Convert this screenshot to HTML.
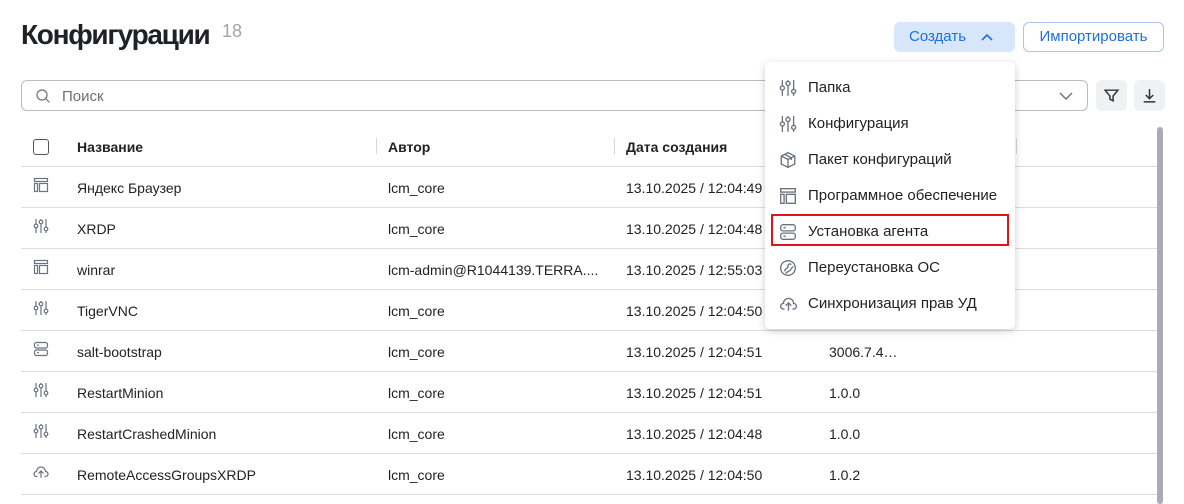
<!DOCTYPE html><html><head><meta charset="utf-8"><style>
body{margin:0;width:1184px;height:504px;overflow:hidden;background:#fff;font-family:"Liberation Sans","Noto Sans CJK SC",sans-serif;color:#222;position:relative}
.abs{position:absolute}
h1{position:absolute;left:21px;top:19px;margin:0;font-size:28px;font-weight:bold;letter-spacing:-1.3px;color:#1f2126}
.cnt{position:absolute;left:222px;top:21px;font-size:18px;color:#a0a4ab}
.btn{position:absolute;height:30px;border-radius:6px;font-size:15px;line-height:30px;color:#1f6fe0;box-sizing:border-box}
.search{position:absolute;left:21px;top:80px;width:1067px;height:31px;border:1px solid #b8bcc2;border-radius:6px;box-sizing:border-box}
.ib{position:absolute;top:80px;width:31px;height:31px;background:#f0f1f3;border-radius:6px}
.row{position:absolute;left:21px;width:1136px;height:40px;border-bottom:1px solid #dadce0;font-size:14px}
.row span{position:absolute;top:13px}
.hd span{font-weight:bold}
.sep{position:absolute;top:12px;width:1px;height:16px;background:#d5d7db}
.menu{position:absolute;left:765px;top:62px;width:250px;height:267px;background:#fff;border-radius:5px;box-shadow:0 2px 8px rgba(0,0,0,.2)}
.mi{position:absolute;left:43px;font-size:15px;color:#222}
.mic{position:absolute;left:14px}
svg{fill:none;stroke:#6b7280;stroke-width:1.2}
</style></head><body>
<svg width="0" height="0" style="position:absolute"><defs>
<symbol id="sl" viewBox="0 0 16 16"><path d="M3 1v5M3 10v5M8 1v1M8 6v9M13 1v8M13 13v2"/><circle cx="3" cy="8" r="1.8"/><circle cx="8" cy="4" r="1.8"/><circle cx="13" cy="11" r="1.8"/></symbol>
<symbol id="sw" viewBox="0 0 16 16"><rect x="1.5" y="1.5" width="13" height="3"/><rect x="1.5" y="6.5" width="3" height="8"/><rect x="6.5" y="6.5" width="8" height="8"/></symbol>
<symbol id="sv" viewBox="0 0 16 16"><rect x="1.5" y="1.5" width="13" height="5.5" rx="2"/><rect x="1.5" y="9" width="13" height="5.5" rx="2"/><path d="M4 4.2h2M4 11.7h2"/></symbol>
<symbol id="cl" viewBox="0 0 16 16"><path d="M4.5 12.5H3.5a2.5 2.5 0 0 1 0-5 4.5 4.5 0 0 1 9 0 2.5 2.5 0 0 1 0 5h-1M8 14V7M5.5 9.5L8 7l2.5 2.5"/></symbol>
<symbol id="bx" viewBox="0 0 16 16"><path d="M8 1.5l6 3v7l-6 3-6-3v-7zM2 4.5l6 3 6-3M8 7.5v7M5 3l6 3v2"/></symbol>
<symbol id="os" viewBox="0 0 16 16"><circle cx="8" cy="8" r="6.5"/><path d="M5 11c0-3 3-2 3-4.5S10 4 11 5M6 13c1-2 3-2 4-3s1-3 3-3"/></symbol>
</defs></svg>
<h1>Конфигурации</h1><div class="cnt">18</div>
<div class="btn" style="left:894px;top:22px;width:121px;background:#d7e6fb;padding-left:15px">Создать <svg style="position:absolute;left:86px;top:9px;stroke:#1f6fe0;stroke-width:1.6" width="14" height="12" viewBox="0 0 14 12"><path d="M2 9l5-5 5 5"/></svg></div>
<div class="btn" style="left:1023px;top:22px;width:141px;border:1px solid #a9c6f0;text-align:center;line-height:28px">Импортировать</div>
<div class="search"><svg class="abs" style="left:13px;top:7px" width="16" height="16" viewBox="0 0 16 16"><circle cx="7" cy="7" r="5"/><path d="M11 11l3.5 3.5"/></svg><span class="abs" style="left:40px;top:7px;font-size:15px;color:#6b7078">Поиск</span><svg class="abs" style="left:1036px;top:8px;stroke-width:1.4" width="16" height="14" viewBox="0 0 16 14"><path d="M2 4l6 6 6-6"/></svg></div>
<div class="ib" style="left:1096px"><svg class="abs" style="left:7px;top:7px;stroke:#333;stroke-width:1.4" width="17" height="17" viewBox="0 0 16 16"><path d="M2 3h12l-4.5 5.5V13l-3-1.5V8.5z"/></svg></div>
<div class="ib" style="left:1134px"><svg class="abs" style="left:7px;top:7px;stroke:#333;stroke-width:1.4" width="17" height="17" viewBox="0 0 16 16"><path d="M8 2v9M4.5 7.5L8 11l3.5-3.5M2.5 14h11"/></svg></div>
<div class="row hd" style="top:126px"><div class="abs" style="left:12px;top:13px;width:14px;height:14px;border:1.5px solid #555;border-radius:3px"></div><span style="left:56px">Название</span><div class="sep" style="left:355px"></div><span style="left:367px">Автор</span><div class="sep" style="left:593px"></div><span style="left:605px">Дата создания</span><div class="sep" style="left:995px"></div></div>
<div class="row" style="top:167px"><svg class="abs" style="left:12px;top:10px" width="16" height="16"><use href="#sw"/></svg><span style="left:56px">Яндекс Браузер</span><span style="left:367px">lcm_core</span><span style="left:605px">13.10.2025 / 12:04:49</span></div>
<div class="row" style="top:208px"><svg class="abs" style="left:12px;top:10px" width="16" height="16"><use href="#sl"/></svg><span style="left:56px">XRDP</span><span style="left:367px">lcm_core</span><span style="left:605px">13.10.2025 / 12:04:48</span></div>
<div class="row" style="top:249px"><svg class="abs" style="left:12px;top:10px" width="16" height="16"><use href="#sw"/></svg><span style="left:56px">winrar</span><span style="left:367px">lcm-admin@R1044139.TERRA....</span><span style="left:605px">13.10.2025 / 12:55:03</span></div>
<div class="row" style="top:290px"><svg class="abs" style="left:12px;top:10px" width="16" height="16"><use href="#sl"/></svg><span style="left:56px">TigerVNC</span><span style="left:367px">lcm_core</span><span style="left:605px">13.10.2025 / 12:04:50</span></div>
<div class="row" style="top:331px"><svg class="abs" style="left:12px;top:10px" width="16" height="16"><use href="#sv"/></svg><span style="left:56px">salt-bootstrap</span><span style="left:367px">lcm_core</span><span style="left:605px">13.10.2025 / 12:04:51</span><span style="left:808px">3006.7.4…</span></div>
<div class="row" style="top:372px"><svg class="abs" style="left:12px;top:10px" width="16" height="16"><use href="#sl"/></svg><span style="left:56px">RestartMinion</span><span style="left:367px">lcm_core</span><span style="left:605px">13.10.2025 / 12:04:51</span><span style="left:808px">1.0.0</span></div>
<div class="row" style="top:413px"><svg class="abs" style="left:12px;top:10px" width="16" height="16"><use href="#sl"/></svg><span style="left:56px">RestartCrashedMinion</span><span style="left:367px">lcm_core</span><span style="left:605px">13.10.2025 / 12:04:48</span><span style="left:808px">1.0.0</span></div>
<div class="row" style="top:454px"><svg class="abs" style="left:12px;top:10px" width="16" height="16"><use href="#cl"/></svg><span style="left:56px">RemoteAccessGroupsXRDP</span><span style="left:367px">lcm_core</span><span style="left:605px">13.10.2025 / 12:04:50</span><span style="left:808px">1.0.2</span></div>
<div class="abs" style="left:1157px;top:127px;width:6px;height:377px;background:#a9adb3;border-radius:3px"></div>
<div class="menu">
<svg class="mic" style="top:17px" width="18" height="18"><use href="#sl"/></svg><div class="mi" style="top:17px">Папка</div>
<svg class="mic" style="top:53px" width="18" height="18"><use href="#sl"/></svg><div class="mi" style="top:53px">Конфигурация</div>
<svg class="mic" style="top:89px" width="18" height="18"><use href="#bx"/></svg><div class="mi" style="top:89px">Пакет конфигураций</div>
<svg class="mic" style="top:125px" width="18" height="18"><use href="#sw"/></svg><div class="mi" style="top:125px">Программное обеспечение</div>
<div class="abs" style="left:6px;top:152px;width:238px;height:32px;border:2px solid #e0141e;box-sizing:border-box"></div>
<svg class="mic" style="top:161px" width="18" height="18"><use href="#sv"/></svg><div class="mi" style="top:161px">Установка агента</div>
<svg class="mic" style="top:197px" width="18" height="18"><use href="#os"/></svg><div class="mi" style="top:197px">Переустановка ОС</div>
<svg class="mic" style="top:233px" width="19" height="18"><use href="#cl"/></svg><div class="mi" style="top:233px">Синхронизация прав УД</div>
</div>
</body></html>
